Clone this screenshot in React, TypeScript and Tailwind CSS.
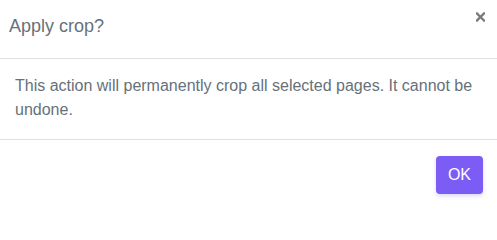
export default function App() {
  return (
    <div className="w-[497px] h-[209px] bg-white flex flex-col text-[#66717a] font-['Liberation_Sans',Arial,sans-serif]">
      {/* Header */}
      <div className="h-[59px] flex items-start justify-between border-b border-[#dee2e6] pl-[9px] pr-[12px] pt-[13px]">
        <h2 className="text-[18px] leading-[27px] font-normal">Apply crop?</h2>
        <button className="mt-[-1px] w-[9px] h-[10px] flex items-center justify-center" aria-label="Close">
          <svg width="9" height="10" viewBox="0 0 9 10" className="block">
            <path d="M1 1.5 L8 8.5 M8 1.5 L1 8.5" stroke="#7a7a7a" strokeWidth="2.4" strokeLinecap="square" />
          </svg>
        </button>
      </div>

      {/* Body */}
      <div className="h-[81px] border-b border-[#dee2e6] px-[15px] pt-[15px]">
        <p className="text-[16px] leading-[24px]">
          This action will permanently crop all selected pages. It cannot be undone.
        </p>
      </div>

      {/* Footer */}
      <div className="flex-1 flex justify-end items-start pt-[16px] pr-[14px]">
        <button className="h-[38px] px-[12px] rounded-[4px] bg-[#7b5cf5] text-white text-[16px] leading-[24px] shadow-[0_2px_4px_rgba(80,60,200,0.2)]">
          OK
        </button>
      </div>
    </div>
  );
}
